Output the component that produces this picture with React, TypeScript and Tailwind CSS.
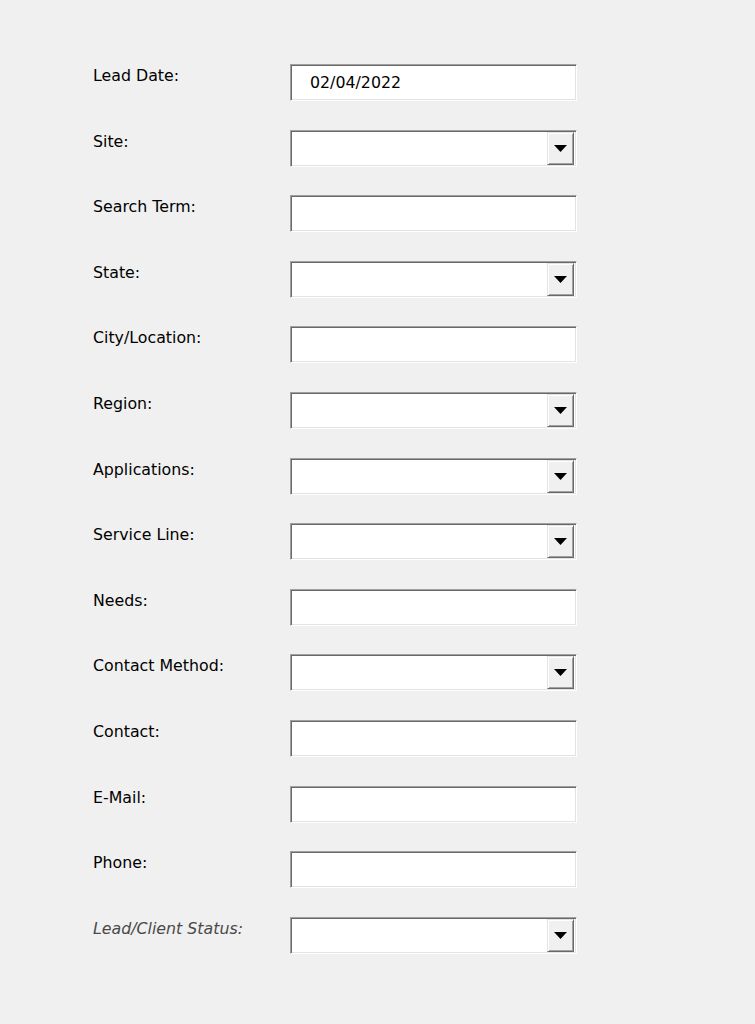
const fields: { label: string; kind: 'text' | 'combo'; value?: string; italic?: boolean }[] = [
  { label: 'Lead Date:', kind: 'text', value: '02/04/2022' },
  { label: 'Site:', kind: 'combo' },
  { label: 'Search Term:', kind: 'text' },
  { label: 'State:', kind: 'combo' },
  { label: 'City/Location:', kind: 'text' },
  { label: 'Region:', kind: 'combo' },
  { label: 'Applications:', kind: 'combo' },
  { label: 'Service Line:', kind: 'combo' },
  { label: 'Needs:', kind: 'text' },
  { label: 'Contact Method:', kind: 'combo' },
  { label: 'Contact:', kind: 'text' },
  { label: 'E-Mail:', kind: 'text' },
  { label: 'Phone:', kind: 'text' },
  { label: 'Lead/Client Status:', kind: 'combo', italic: true },
];

const SunkenBox = ({ kind, value }: { kind: 'text' | 'combo'; value?: string }) => (
  <div className="flex h-[37px] w-[287px] items-stretch border border-t-[#a0a0a0] border-l-[#a0a0a0] border-b-white border-r-white bg-white shadow-[inset_1px_1px_0_#696969,inset_-1px_-1px_0_#e3e3e3]">
    <div className="flex flex-1 items-center pl-[19px] text-[15.8px] leading-[20px] text-black">
      {value}
    </div>
    {kind === 'combo' && (
      <div className="my-px mr-[2px] flex w-[27px] items-center justify-center border border-t-[#e3e3e3] border-l-[#e3e3e3] border-b-[#696969] border-r-[#696969] bg-[#f0f0f0] shadow-[inset_1px_1px_0_#ffffff,inset_-1px_-1px_0_#a0a0a0]">
        <svg width="13" height="7" viewBox="0 0 13 7">
          <polygon points="0,0 13,0 6.5,7" fill="#000" />
        </svg>
      </div>
    )}
  </div>
);

export default function App() {
  return (
    <div
      className="min-h-[1024px] w-full bg-[#f0f0f0] pt-[64px] pl-[93px]"
      style={{ fontFamily: '"DejaVu Sans", Verdana, sans-serif' }}
    >
      <div className="flex flex-col gap-[28.6px]">
        {fields.map((f) => (
          <div key={f.label} className="flex items-start">
            <div
              className={`w-[197px] pt-[2px] text-[15.8px] leading-[20px] ${
                f.italic ? 'italic text-[#4a4a4a]' : 'text-black'
              }`}
            >
              {f.label}
            </div>
            <SunkenBox kind={f.kind} value={f.value} />
          </div>
        ))}
      </div>
    </div>
  );
}
